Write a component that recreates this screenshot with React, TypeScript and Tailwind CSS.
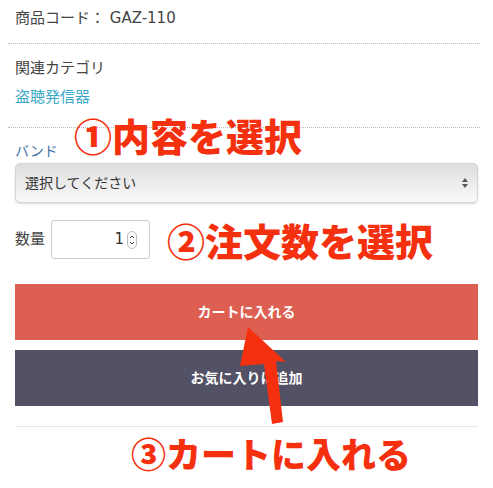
import React from "react";

const Annotation = ({ text, className }: { text: string; className: string }) => (
  <span
    className={`absolute font-black leading-none text-[#f5300f] whitespace-nowrap ${className}`}
    style={{ fontFamily: '"Noto Sans CJK JP", sans-serif' }}
  >
    {text}
  </span>
);

const App = () => {
  return (
    <div
      className="relative w-[493px] h-[488px] bg-white overflow-hidden text-[#444]"
      style={{ fontFamily: '"DejaVu Sans", "Noto Sans CJK JP", sans-serif' }}
    >
      <div className="px-[15px] pt-[7px] text-[15px] leading-[22px]">商品コード： GAZ-110</div>
      <div className="ml-[8px] w-[472px] mt-[14px] border-t border-dotted border-[#bbb]" />

      <div className="px-[15px] mt-[13px] text-[15px] leading-[22px]">関連カテゴリ</div>
      <div className="px-[15px] mt-[7px] text-[15px] leading-[22px] text-[#3aa9c8]">盗聴発信器</div>
      <div className="ml-[8px] w-[472px] mt-[19px] border-t border-dotted border-[#bbb]" />

      <div className="px-[15px]">
        <div className="mt-[13px] text-[14px] leading-[20px] text-[#3d74a8]">バンド</div>
        <div className="mt-[2px] h-[40px] flex items-center justify-between rounded-[5px] border border-[#d4d4d4] bg-gradient-to-b from-[#dedede] to-[#f9f9f9] shadow-[0_1px_2px_rgba(0,0,0,0.15)] px-[9px]">
          <span className="text-[14px] text-[#333]">選択してください</span>
          <svg width="8" height="12" viewBox="0 0 8 12" className="mr-[-1px]">
            <path d="M4 1 L7 5 L1 5 Z" fill="#555" />
            <path d="M4 11 L7 7 L1 7 Z" fill="#555" />
          </svg>
        </div>

        <div className="mt-[17px] flex items-center gap-[6px]">
          <span className="text-[15px]">数量</span>
          <div className="w-[99px] h-[39px] rounded-[3px] border border-[#ccc] flex items-center justify-end pr-[12px] gap-[3px]">
            <span className="text-[15px] text-[#333]">1</span>
            <svg width="10" height="18" viewBox="0 0 10 18">
              <rect x="0.5" y="0.5" width="9" height="17" rx="4.5" fill="#fafafa" stroke="#bbb" />
              <path d="M3 7 L5 5 L7 7" fill="none" stroke="#444" strokeWidth="1" />
              <path d="M3 11 L5 13 L7 11" fill="none" stroke="#444" strokeWidth="1" />
            </svg>
          </div>
        </div>

        <button className="mt-[25px] w-full h-[56px] bg-[#dd5f51] text-white text-[14px] font-bold flex items-center justify-center">
          カートに入れる
        </button>
        <button className="mt-[10px] w-full h-[56px] bg-[#535165] text-white text-[14px] font-bold flex items-center justify-center">
          お気に入りに追加
        </button>
        <div className="mt-[20px] border-t border-[#e6e6e6]" />
      </div>

      <Annotation text="①内容を選択" className="left-[74px] top-[116px] text-[38px]" />
      <Annotation text="②注文数を選択" className="left-[167px] top-[221px] text-[38px]" />
      <Annotation text="③カートに入れる" className="left-[131px] top-[435px] text-[35px]" />

      <svg className="absolute left-0 top-0" width="493" height="488" viewBox="0 0 493 488">
        <polygon
          points="248,327 286,362 276,361 283,422 272,424 264,364 240,366"
          fill="#f5300f"
        />
      </svg>
    </div>
  );
};

export default App;
